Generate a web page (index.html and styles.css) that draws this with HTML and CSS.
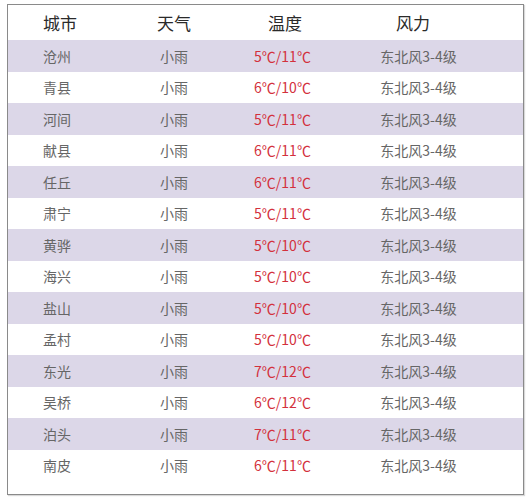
FILE: index.html
```html
<!DOCTYPE html>
<html lang="zh">
<head>
<meta charset="utf-8">
<link rel="stylesheet" href="styles.css">
</head>
<body>
<div class="table">
  <div class="row head">
    <div class="c1">城市</div><div class="c2">天气</div><div class="c3">温度</div><div class="c4">风力</div>
  </div>
  <div class="row odd"><div class="c1">沧州</div><div class="c2">小雨</div><div class="c3 t">5℃/11℃</div><div class="c4">东北风3-4级</div></div>
  <div class="row"><div class="c1">青县</div><div class="c2">小雨</div><div class="c3 t">6℃/10℃</div><div class="c4">东北风3-4级</div></div>
  <div class="row odd"><div class="c1">河间</div><div class="c2">小雨</div><div class="c3 t">5℃/11℃</div><div class="c4">东北风3-4级</div></div>
  <div class="row"><div class="c1">献县</div><div class="c2">小雨</div><div class="c3 t">6℃/11℃</div><div class="c4">东北风3-4级</div></div>
  <div class="row odd"><div class="c1">任丘</div><div class="c2">小雨</div><div class="c3 t">6℃/11℃</div><div class="c4">东北风3-4级</div></div>
  <div class="row"><div class="c1">肃宁</div><div class="c2">小雨</div><div class="c3 t">5℃/11℃</div><div class="c4">东北风3-4级</div></div>
  <div class="row odd"><div class="c1">黄骅</div><div class="c2">小雨</div><div class="c3 t">5℃/10℃</div><div class="c4">东北风3-4级</div></div>
  <div class="row"><div class="c1">海兴</div><div class="c2">小雨</div><div class="c3 t">5℃/10℃</div><div class="c4">东北风3-4级</div></div>
  <div class="row odd"><div class="c1">盐山</div><div class="c2">小雨</div><div class="c3 t">5℃/10℃</div><div class="c4">东北风3-4级</div></div>
  <div class="row"><div class="c1">孟村</div><div class="c2">小雨</div><div class="c3 t">5℃/10℃</div><div class="c4">东北风3-4级</div></div>
  <div class="row odd"><div class="c1">东光</div><div class="c2">小雨</div><div class="c3 t">7℃/12℃</div><div class="c4">东北风3-4级</div></div>
  <div class="row"><div class="c1">吴桥</div><div class="c2">小雨</div><div class="c3 t">6℃/12℃</div><div class="c4">东北风3-4级</div></div>
  <div class="row odd"><div class="c1">泊头</div><div class="c2">小雨</div><div class="c3 t">7℃/11℃</div><div class="c4">东北风3-4级</div></div>
  <div class="row"><div class="c1">南皮</div><div class="c2">小雨</div><div class="c3 t">6℃/11℃</div><div class="c4">东北风3-4级</div></div>
</div>
</body>
</html>
```
FILE: styles.css
```css
html, body {
  margin: 0;
  padding: 0;
  background: #ffffff;
}
body {
  padding: 4px 6px 3px 7px;
  font-family: "Noto Sans CJK SC", "Noto Sans", sans-serif;
}
.table {
  border: 1px solid #8a8a8a;
  box-sizing: border-box;
  width: 517px;
  height: 491px;
  padding-bottom: 16px;
  box-shadow: 1px 1px 1px rgba(0,0,0,0.15);
}
.row {
  display: grid;
  grid-template-columns: 112px 108px 109px 186px;
  height: 31.5px;
  align-items: center;
  font-size: 14px;
  color: #666666;
  line-height: 1;
}
.row.odd {
  background: #dcd7e8;
}
.row.head {
  height: 35px;
  font-size: 17px;
  font-weight: 400;
  color: #2a2a2a;
}
.c1 {
  padding-left: 35px;
}
.c2, .c3, .c4 {
  text-align: center;
}
.c4 {
  padding-right: 23px;
}
.head .c3 {
  padding-left: 5px;
}
.head .c4 {
  padding-right: 34px;
}
.t {
  color: #d3303c;
}
```
